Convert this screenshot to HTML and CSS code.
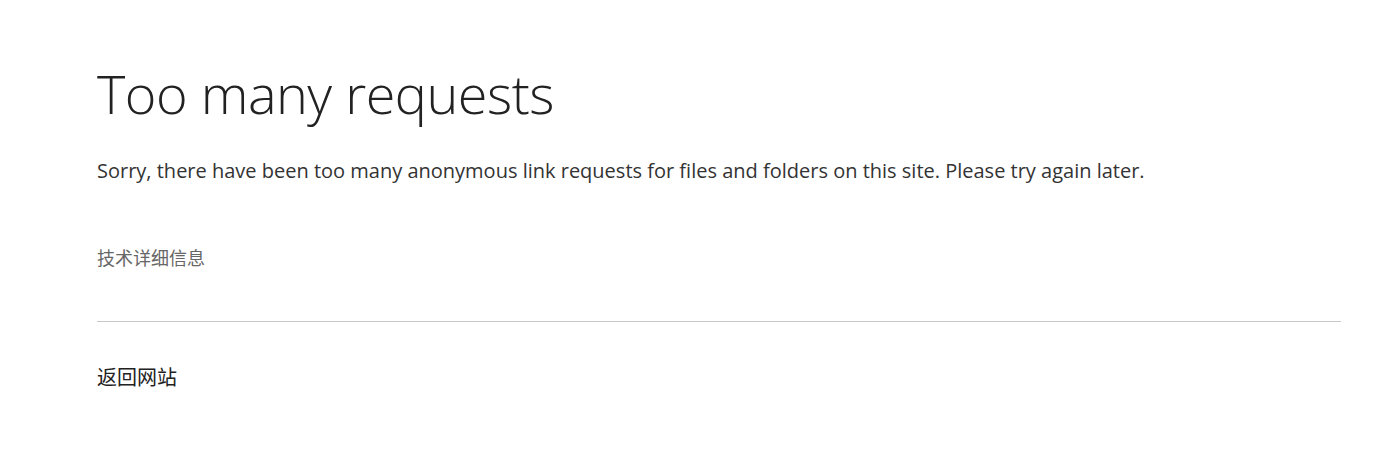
FILE: index.html
```html
<!DOCTYPE html>
<html lang="zh-CN">
<head>
<meta charset="utf-8">
<title>Too many requests</title>
<link rel="stylesheet" href="styles.css">
</head>
<body>
<main class="page">
  <h1 class="title">Too many requests</h1>
  <p class="message">Sorry, there have been too many anonymous link requests for files and folders on this site. Please try again later.</p>
  <div class="details">技术详细信息</div>
  <hr class="divider">
  <a class="back" href="#">返回网站</a>
</main>
</body>
</html>
```

FILE: styles.css
```css
html, body {
  margin: 0;
  padding: 0;
  background: #ffffff;
}
body {
  font-family: "Open Sans", "Noto Sans CJK SC", sans-serif;
  color: #333333;
}
.page {
  padding: 57px 58px 40px 97px;
  display: flex;
  flex-direction: column;
}
.title {
  margin: 0;
  font-family: "Open Sans", sans-serif;
  font-weight: 300;
  font-size: 54px;
  letter-spacing: -0.5px;
  line-height: 72px;
  color: #222222;
}
.message {
  margin: 28px 0 0 0;
  font-size: 20px;
  line-height: 28px;
  color: #333333;
}
.details {
  margin-top: 59px;
  font-family: "Noto Sans CJK SC", sans-serif;
  font-size: 18px;
  line-height: 26px;
  color: #666666;
}
.divider {
  margin: 51px 0 0 0;
  border: 0;
  border-top: 1px solid #c8c8c8;
  height: 0;
  width: 100%;
}
.back {
  margin-top: 41px;
  font-family: "Noto Sans CJK SC", sans-serif;
  font-size: 20px;
  line-height: 28px;
  color: #222222;
  text-decoration: none;
  align-self: flex-start;
}
```
